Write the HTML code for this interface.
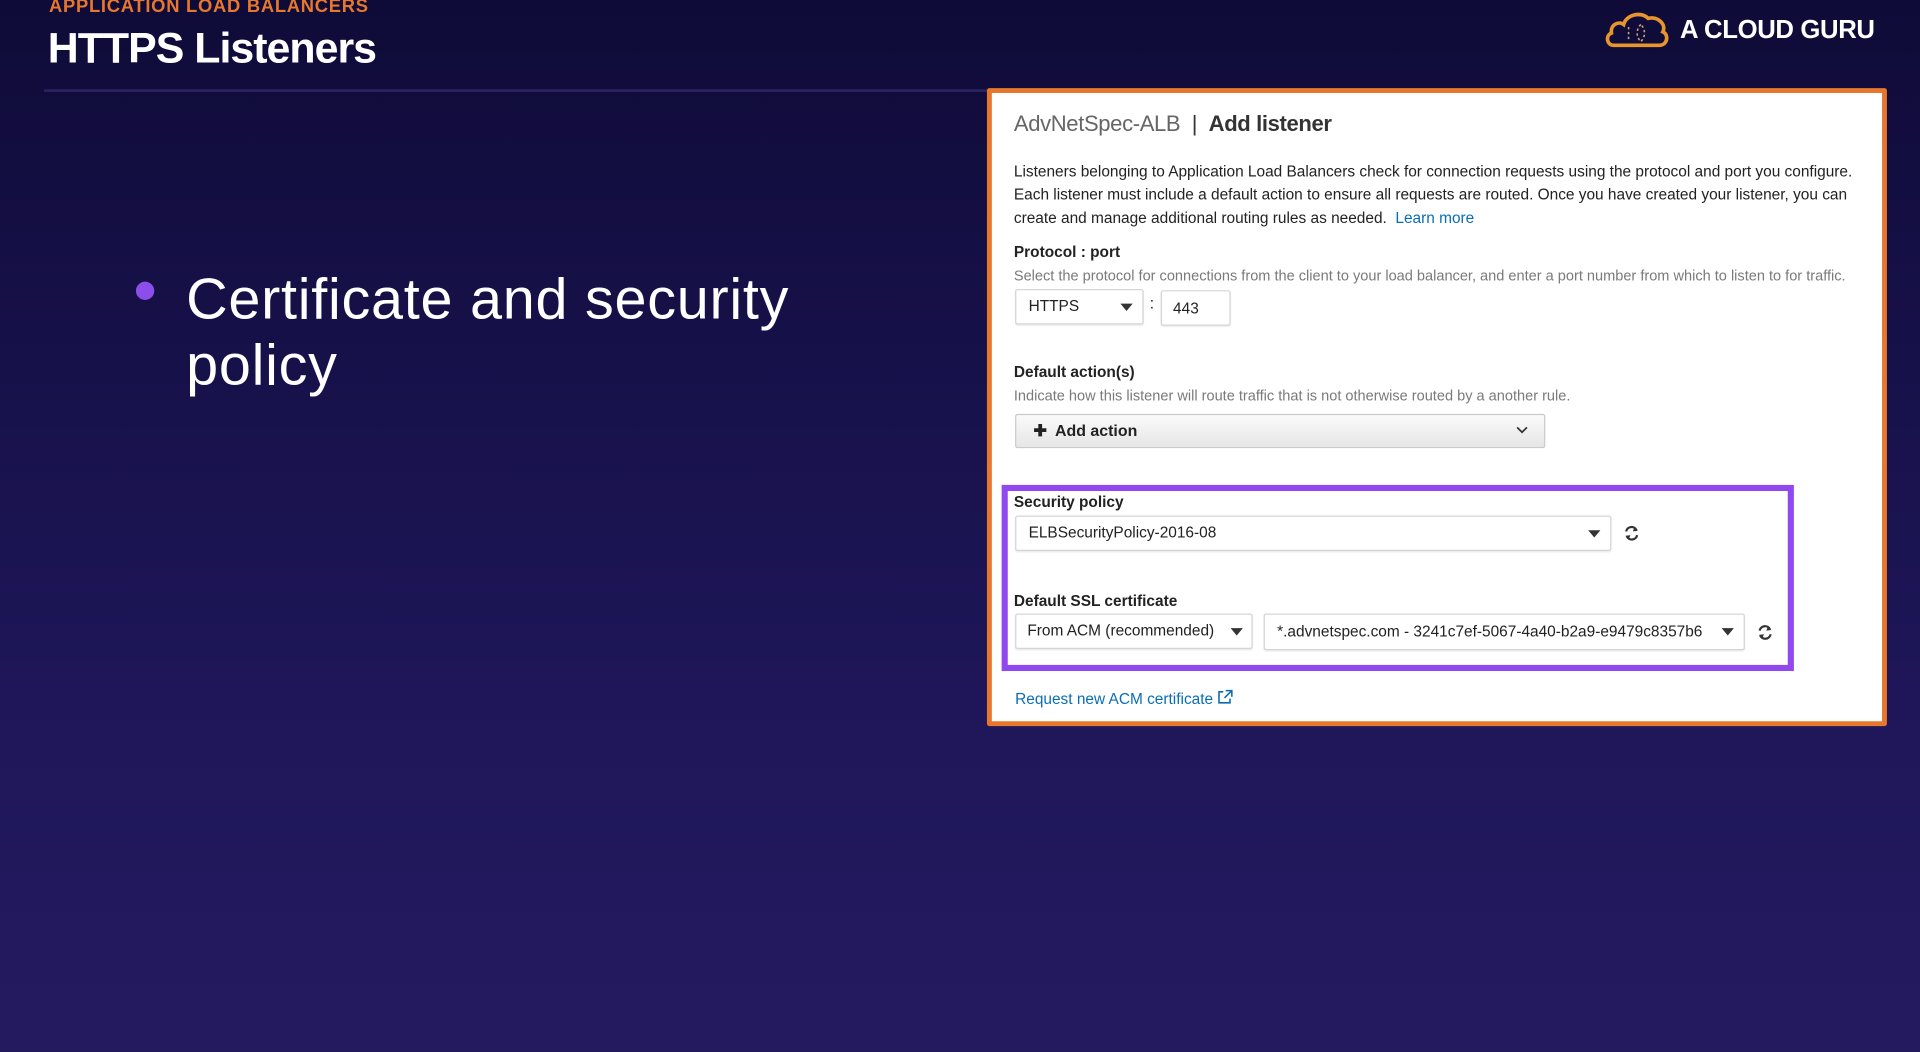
<!DOCTYPE html>
<html><head><meta charset="utf-8"><style>
html,body{margin:0;padding:0;width:1920px;height:1052px;overflow:hidden;background:#14103f;}
#w{position:absolute;left:0;top:0;width:1568px;height:859px;transform:scale(1.2244898);transform-origin:0 0;
background:linear-gradient(180deg,#0f0b38 0%,#17114a 35%,#1f175a 70%,#241a60 100%);font-family:"Liberation Sans",sans-serif;overflow:hidden;}
.a{position:absolute;white-space:nowrap;}
.p{color:#222;font-size:12.6px;}
.g{color:#7a7a7a;font-size:11.9px;}
.b{font-weight:bold;color:#222;font-size:12.6px;}
.sel{position:absolute;border:1px solid #d5d5d5;border-radius:2px;background:#fff;box-shadow:0 1px 1px rgba(0,0,0,.08);font-size:12.6px;color:#222;}
.tri{position:absolute;width:0;height:0;border-left:5px solid transparent;border-right:5px solid transparent;border-top:6px solid #333;}
</style></head><body><div id="w">
<div class="a" style="left:40px;top:-3px;color:#e8772e;font-weight:bold;font-size:15px;letter-spacing:.6px">APPLICATION LOAD BALANCERS</div>
<div class="a" style="left:39px;top:20px;color:#fff;font-weight:bold;font-size:35px;letter-spacing:-0.8px">HTTPS Listeners</div>
<div class="a" style="left:36px;top:73px;width:770px;height:2px;background:#2b2663"></div>
<svg class="a" style="left:1310px;top:8px" width="54" height="32" viewBox="0 0 54 32"><path d="M8 29 C2 29 1 21 6 19 C5 12 12 9 16 12 C18 4 30 1 36 7 C44 5 51 12 48 18 C53 20 52 29 45 29 Z" fill="none" stroke="#e8952e" stroke-width="3"/><path d="M20 14 v12 M30 12 c-4 4 -4 10 0 14 c4-4 4-10 0-14" stroke="#c9a070" stroke-width="1.3" fill="none" stroke-dasharray="2 2"/></svg>
<div class="a" style="left:1372px;top:13px;color:#fff;font-weight:bold;font-size:21px;letter-spacing:-.3px">A CLOUD GURU</div>
<div class="a" style="left:111px;top:230px;width:15px;height:15px;border-radius:50%;background:#8b4ee8"></div>
<div class="a" style="left:152px;top:217px;color:#fff;font-size:47px;line-height:54px;letter-spacing:0.6px">Certificate and security<br>policy</div>

<div class="a" style="left:806px;top:72px;width:727px;height:513px;border:4px solid #e8772e;background:#fff;border-radius:2px"></div>
<div class="a" style="left:828px;top:91px;font-size:18px;color:#666;letter-spacing:-0.3px">AdvNetSpec-ALB <span style="color:#333">&nbsp;|&nbsp;</span> <span style="color:#333;font-weight:700">Add listener</span></div>
<div class="a p" style="left:828px;top:131px;line-height:19px">Listeners belonging to Application Load Balancers check for connection requests using the protocol and port you configure.<br>Each listener must include a default action to ensure all requests are routed. Once you have created your listener, you can<br>create and manage additional routing rules as needed. &nbsp;<span style="color:#0a6eb4">Learn more</span></div>
<div class="a b" style="left:828px;top:199px">Protocol : port</div>
<div class="a g" style="left:828px;top:218px">Select the protocol for connections from the client to your load balancer, and enter a port number from which to listen to for traffic.</div>
<div class="sel" style="left:829px;top:236px;width:103px;height:27px"><span class="a" style="left:10px;top:6px">HTTPS</span><div class="tri" style="left:85px;top:11px"></div></div>
<div class="a p" style="left:939px;top:241px">:</div>
<div class="sel" style="left:948px;top:237px;width:55px;height:27px"><span class="a" style="left:9px;top:7px">443</span></div>
<div class="a b" style="left:828px;top:297px">Default action(s)</div>
<div class="a g" style="left:828px;top:316px">Indicate how this listener will route traffic that is not otherwise routed by a another rule.</div>
<div class="a" style="left:829px;top:338px;width:431px;height:26px;border:1px solid #c9c9c9;border-radius:2px;background:linear-gradient(#fafafa,#e6e6e6)"><span class="a b" style="left:14px;top:5px;font-size:13px">✚&nbsp; Add action</span><svg class="a" style="left:408px;top:9px" width="10" height="7"><path d="M1 1 L5 5 L9 1" stroke="#333" stroke-width="1.4" fill="none"/></svg></div>

<div class="a" style="left:818px;top:396px;width:637px;height:142px;border:5px solid #9049ef;background:#fff"></div>
<div class="a b" style="left:828px;top:403px">Security policy</div>
<div class="sel" style="left:829px;top:421px;width:485px;height:27px"><span class="a" style="left:10px;top:6px">ELBSecurityPolicy-2016-08</span><div class="tri" style="left:467px;top:11px"></div></div>
<svg class="a" style="left:1326px;top:429px" width="13" height="13" viewBox="0 0 13 13"><path d="M2 5 A4.5 4.5 0 0 1 10.5 4 M11 8 A4.5 4.5 0 0 1 2.5 9" stroke="#333" stroke-width="1.8" fill="none"/><path d="M9 1 L11.5 4.5 L7.5 5 Z M4 12 L1.5 8.5 L5.5 8 Z" fill="#333"/></svg>
<div class="a b" style="left:828px;top:484px">Default SSL certificate</div>
<div class="sel" style="left:829px;top:501px;width:192px;height:27px"><span class="a" style="left:9px;top:6px">From ACM (recommended)</span><div class="tri" style="left:175px;top:11px"></div></div>
<div class="sel" style="left:1032px;top:501px;width:391px;height:28px"><span class="a" style="left:10px;top:7px">*.advnetspec.com - 3241c7ef-5067-4a40-b2a9-e9479c8357b6</span><div class="tri" style="left:373px;top:11px"></div></div>
<svg class="a" style="left:1435px;top:510px" width="13" height="13" viewBox="0 0 13 13"><path d="M2 5 A4.5 4.5 0 0 1 10.5 4 M11 8 A4.5 4.5 0 0 1 2.5 9" stroke="#333" stroke-width="1.8" fill="none"/><path d="M9 1 L11.5 4.5 L7.5 5 Z M4 12 L1.5 8.5 L5.5 8 Z" fill="#333"/></svg>
<div class="a" style="left:829px;top:563px;font-size:12.6px;color:#0a6eb4">Request new ACM certificate <svg width="13" height="12" viewBox="0 0 13 12" style="vertical-align:0"><path d="M5 2 H1.5 V11 H10.5 V7.5 M7 1 H12 V6 M12 1 L6 7" stroke="#0a6eb4" stroke-width="1.3" fill="none"/></svg></div>
</div></body></html>
